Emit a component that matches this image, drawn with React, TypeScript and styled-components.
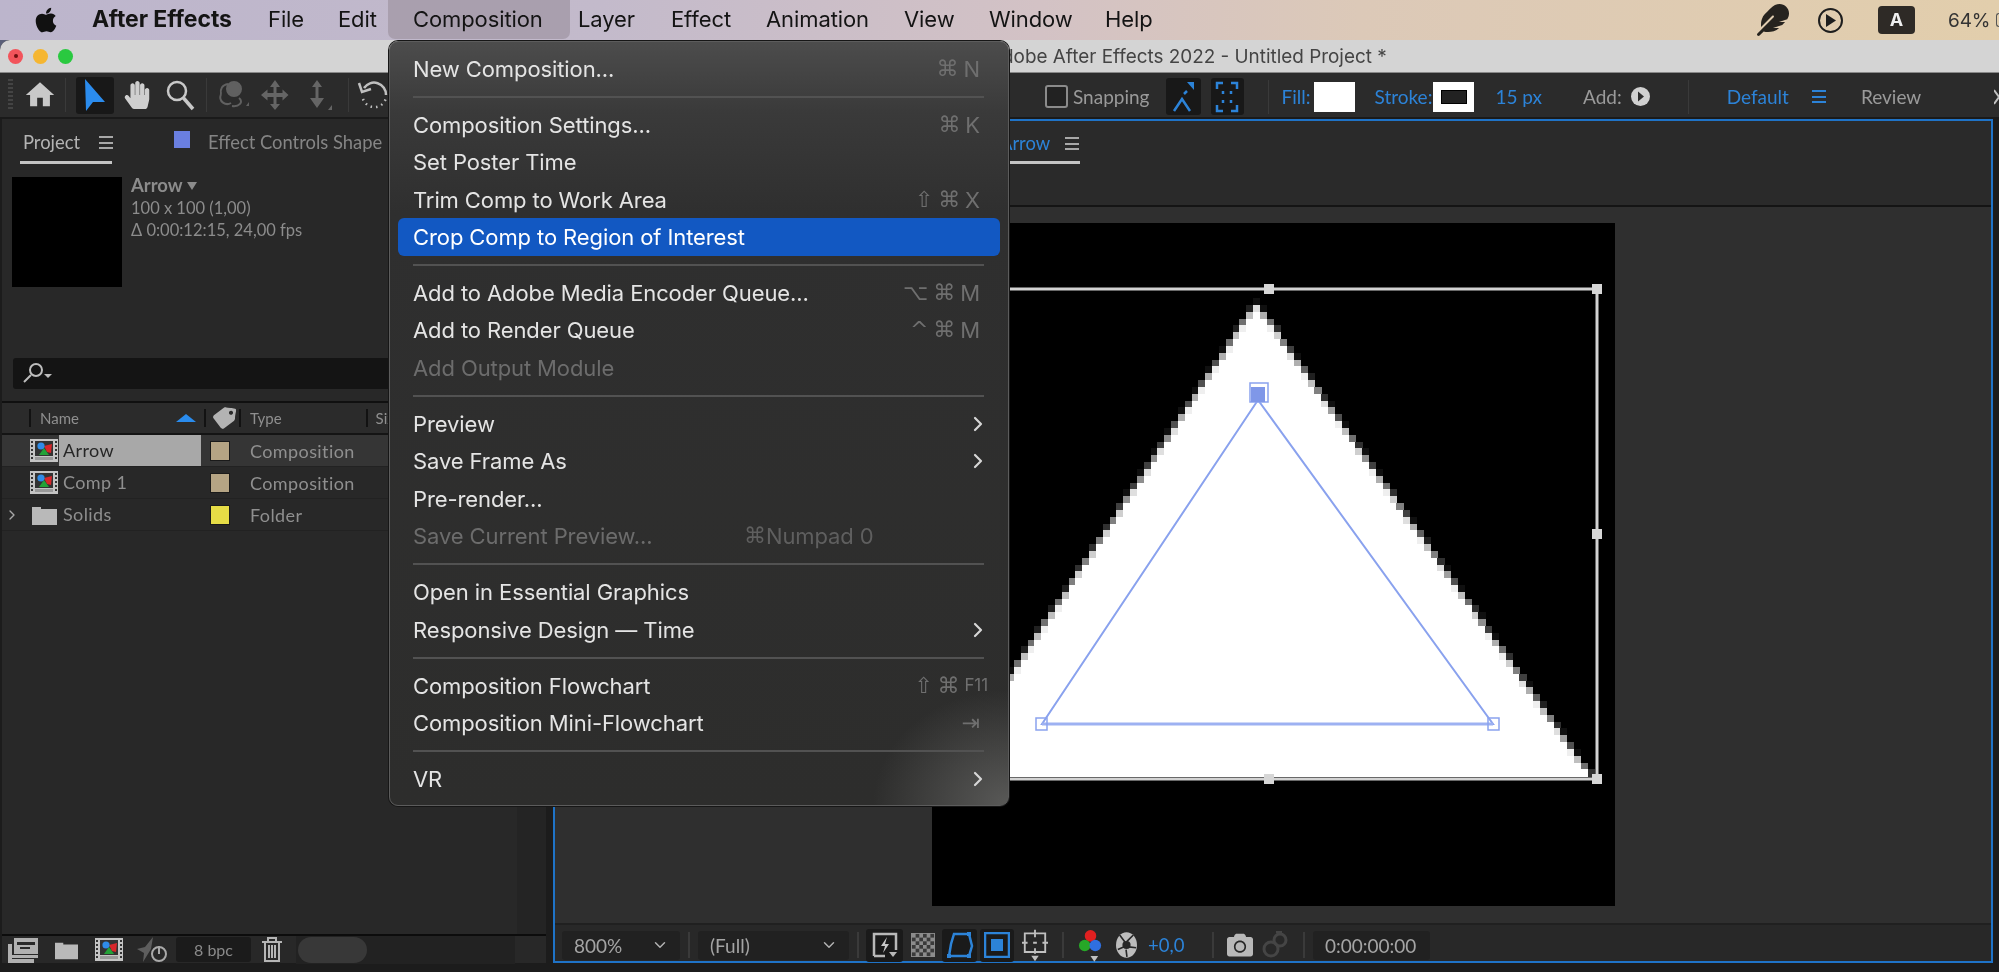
import React from "react";
import styled, { createGlobalStyle } from "styled-components";
import { FaApple, FaFeather, FaHandPaper, FaCamera, FaTag } from "react-icons/fa";
import { MdHome } from "react-icons/md";
import { ChevronRight, ChevronDown } from "lucide-react";

const Global = createGlobalStyle`
  html, body { margin: 0; padding: 0; background: #1e1e1e; overflow: hidden; }
  * { box-sizing: border-box; }
`;

const ui = `"Lato", "Open Sans", sans-serif`;
const mac = `"Inter", "Liberation Sans", sans-serif`;
const blue = "#2c83d8";

const Page = styled.div`
  position: relative; width: 1999px; height: 972px; overflow: hidden;
  display: flex; flex-direction: column; background: #5a5f78; font-family: ${ui};
  filter: blur(0.45px);
`;

/* ---------- macOS menu bar ---------- */
const MenuBar = styled.div`
  height: 40px; flex: none; display: flex; align-items: stretch; padding-left: 35px;
  background: linear-gradient(90deg, #bcb5cc 0%, #c3bacb 30%, #d3c2c5 52%, #dcc9b8 68%, #e2ceac 100%);
  color: #141414; font: 400 22px/39px ${mac}; letter-spacing: -0.1px;
`;
const AppleMark = styled.div`width: 22px; display: flex; align-items: center; justify-content: center; margin-right: 35px; color: #111;`;
const AppName = styled.div`font-weight: 700; font-size: 23px; width: 176px; flex: none; white-space: nowrap;`;
const MenuTitle = styled.div<{ $w: number; $active?: boolean }>`
  width: ${p => p.$w}px; flex: none; white-space: nowrap;
  ${p => p.$active ? `background: #a99fae; border-radius: 0 0 7px 7px; padding-left: 25px; margin: 0 8px 1px -25px;` : ""}
`;
const StatusArea = styled.div`margin-left: auto; display: flex; align-items: center; color: #2a2a2a;`;
const PlayCircle = styled.div`
  width: 25px; height: 25px; margin: 0 0 0 29px; border: 2.5px solid #1e1e1e; border-radius: 50%;
  display: flex; align-items: center; justify-content: center;
`;
const InputBadge = styled.div`
  width: 37px; height: 28px; margin-left: 35px; border-radius: 4px; background: #2e2a26; color: #f0f0f0;
  font: 700 18px/28px ${mac}; text-align: center;
`;
const Battery = styled.div`
  margin-left: 33px; width: 51px; display: flex; align-items: center; justify-content: space-between;
  font: 400 19px/39px ${mac}; color: #333; white-space: nowrap;
`;
const BatteryEdge = styled.span`width: 3px; height: 14px; border: 1.5px solid #555; border-right: 0; border-radius: 3px 0 0 3px;`;

/* ---------- Application window ---------- */
const Window = styled.div`
  flex: 1; min-height: 0; display: flex; flex-direction: column; background: #1c1c1c;
  border-radius: 10px 0 0 0; overflow: hidden;
`;
const TitleBar = styled.div`
  height: 33px; flex: none; background: #d4d4d4; display: flex; align-items: center; padding-left: 8px; border-bottom: 1px solid #888;
`;
const Light = styled.span<{ $c: string }>`
  width: 15px; height: 15px; border-radius: 50%; background: ${p => p.$c}; margin-right: 10px; flex: none;
  display: flex; align-items: center; justify-content: center;
`;
const Dot = styled.span`width: 4px; height: 4px; border-radius: 50%; background: #701010;`;
const WindowTitle = styled.div`margin-left: 906px; padding-top: 1px; font: 400 18.9px/32px ${mac}; color: #444; white-space: nowrap;`;

const Toolbar = styled.div`
  height: 46px; flex: none; display: flex; align-items: center;
  background: #2b2b2b; border-bottom: 2px solid #1a1a1a; overflow: hidden;
`;
const ToolGroup = styled.div<{ $left?: boolean }>`
  display: flex; align-items: center; height: 100%; flex: none;
  ${p => p.$left ? "width: 1045px;" : "width: 954px; padding-top: 3px;"}
`;
const Grip = styled.div`
  width: 5px; height: 32px; margin-left: 8px;
  background: repeating-linear-gradient(180deg, #444 0 2px, transparent 2px 4px);
`;
const ToolSlot = styled.div<{ $w: number; $ml?: number; $on?: boolean; $h?: number }>`
  width: ${p => p.$w}px; height: ${p => p.$h ?? 37}px; margin-left: ${p => p.$ml ?? 0}px; flex: none;
  display: flex; align-items: center; justify-content: center; border-radius: 3px;
  background: ${p => p.$on ? "#181818" : "transparent"};
`;
const ToolDivider = styled.div<{ $ml: number }>`width: 1px; height: 34px; background: #3a3a3a; margin-left: ${p => p.$ml}px; flex: none;`;
const SnapBox = styled.div`width: 23px; height: 23px; border: 2.5px solid #8b8b8b; border-radius: 3px; background: #222; flex: none;`;
const ToolLabel = styled.span<{ $c?: string; $ml?: number }>`
  font: 400 19px/1 ${ui}; color: ${p => p.$c ?? "#9a9a9a"}; margin-left: ${p => p.$ml ?? 0}px; white-space: nowrap; flex: none;
`;
const Swatch = styled.div<{ $ml: number }>`
  width: 41px; height: 30px; background: #fff; margin-left: ${p => p.$ml}px; flex: none;
  display: flex; align-items: center; justify-content: center;
`;
const SwatchHole = styled.div`width: 26px; height: 14px; background: #222; border: 1px solid #000;`;
const Burger = styled.div<{ $c?: string; $ml?: number }>`
  width: 14px; height: 13px; margin-left: ${p => p.$ml ?? 0}px; flex: none;
  background: repeating-linear-gradient(180deg, ${p => p.$c ?? "#a8a8a8"} 0 2px, transparent 2px 5.5px);
`;
const MoreMark = styled.svg`margin-left: auto; flex: none;`;

const Workspace = styled.div`flex: 1; min-height: 0; display: flex; padding-bottom: 9px; background: #1c1c1c;`;

/* ---------- Project panel ---------- */
const ProjectPanel = styled.div`
  width: 544px; flex: none; margin-left: 2px; display: flex; flex-direction: column; background: #282828;
`;
const PanelTabs = styled.div`height: 45px; flex: none; display: flex; align-items: flex-start;`;
const Tab = styled.div<{ $ml: number; $active?: boolean; $w?: number }>`
  margin-left: ${p => p.$ml}px; height: 45px; display: flex; align-items: center; padding: 4px 0 0 3px;
  ${p => p.$w ? `width:${p.$w}px;` : ""}
  border-bottom: ${p => p.$active ? "3px solid #c4c4c4" : "3px solid transparent"};
`;
const TabText = styled.span<{ $c: string }>`font: 400 18.4px/1 ${ui}; color: ${p => p.$c}; white-space: nowrap;`;
const ColorChip = styled.span`width: 16px; height: 17px; background: #6a7fe0; margin-right: 18px; flex: none; margin-top: -6px;`;
const InfoRow = styled.div`height: 194px; flex: none; display: flex; padding: 13px 0 0 10px;`;
const Thumb = styled.div`width: 110px; height: 110px; background: #000; flex: none;`;
const InfoText = styled.div`margin-left: 9px; margin-top: -3px;`;
const InfoName = styled.div`font: 700 18.5px/23px ${ui}; color: #8c8c8c; display: flex; align-items: center; gap: 4px;`;
const DownCaret = styled.span`width: 0; height: 0; border-left: 5px solid transparent; border-right: 5px solid transparent; border-top: 8px solid #8c8c8c;`;
const InfoLine = styled.div`font: 400 16.5px/22px ${ui}; color: #8c8c8c; white-space: nowrap;`;
const SearchField = styled.div`
  height: 31px; flex: none; margin: 0 28px 0 11px; background: #141414; border-radius: 3px; display: flex; align-items: center; padding-left: 10px;
`;
const Header = styled.div`
  height: 34px; flex: none; margin-top: 12px; display: flex; align-items: center; background: #2b2b2b;
  border-top: 2px solid #101010; border-bottom: 2px solid #141414; position: relative;
`;
const HeadSep = styled.div<{ $ml: number }>`width: 2px; height: 18px; background: #121212; margin-left: ${p => p.$ml}px; flex: none;`;
const HeadText = styled.span<{ $ml: number }>`font: 400 15px/1 ${ui}; color: #8f8f8f; margin-left: ${p => p.$ml}px; flex: none;`;
const SortCaret = styled.span`
  width: 0; height: 0; margin-left: 97px; flex: none; border-left: 10px solid transparent; border-right: 10px solid transparent; border-bottom: 8px solid #2a8cee;
`;
const Row = styled.div<{ $sel?: boolean }>`
  height: 32px; flex: none; display: flex; align-items: center; border-bottom: 1px solid #222; position: relative;
  background: ${p => p.$sel ? "#353535" : "#282828"};
`;
const Twisty = styled.div`width: 27px; flex: none; display: flex; justify-content: center; color: #a8a8a8;`;
const RowIcon = styled.div`width: 30px; flex: none; display: flex; justify-content: center;`;
const RowName = styled.div<{ $sel?: boolean }>`
  width: 142px; height: ${p => p.$sel ? 31 : 32}px; flex: none; padding-left: 4px; margin-right: 10px;
  font: 400 18px/31px ${ui}; letter-spacing: .4px;
  background: ${p => p.$sel ? "#a8a8a8" : "transparent"}; color: ${p => p.$sel ? "#262626" : "#8f8f8f"}; white-space: nowrap;
`;
const Label = styled.div<{ $c: string }>`
  width: 18px; height: 18px; flex: none; background: ${p => p.$c}; outline: 1px solid #1a1a1a;
`;
const RowType = styled.div`font: 400 18px/1 ${ui}; color: #8f8f8f; margin-left: 21px; letter-spacing: .4px;`;
const PanelFill = styled.div`flex: 1; min-height: 0; display: flex; justify-content: flex-end;`;
const ScrollTrack = styled.div`width: 29px; background: #242424;`;
const BottomBar = styled.div`
  height: 29px; flex: none; display: flex; align-items: center; background: #282828; border-top: 2px solid #0c0c0c; position: relative;
`;
const BpcBox = styled.div`
  width: 75px; height: 25px; margin-left: 9px; flex: none; background: #1b1b1b; border-radius: 3px;
  font: 400 16px/25px ${ui}; color: #8a8a8a; text-align: center;
`;
const DarkZone = styled.div`
  flex: none; width: 219px; height: 28px; margin-left: 14px; background: #222; display: flex; align-items: center; padding-left: 2px;
`;
const Pill = styled.div`width: 69px; height: 26px; border-radius: 13px; background: #383838;`;
const IconSlot = styled.div<{ $w: number; $ml: number }>`
  width: ${p => p.$w}px; margin-left: ${p => p.$ml}px; flex: none; display: flex; justify-content: center; align-items: center;
`;

/* ---------- Composition panel ---------- */
const CompPanel = styled.div`
  width: 1440px; margin-left: 7px; flex: none; display: flex; flex-direction: column; border: 2px solid #1f73c7; background: #2a2a2a;
`;
const CompTabs = styled.div`height: 86px; flex: none; display: flex; align-items: flex-start; border-bottom: 2px solid #141414;`;
const CompTab = styled.div`
  margin-left: 445px; height: 43px; display: flex; align-items: center; padding-top: 4px; width: 80px; gap: 15px;
  border-bottom: 3px solid #c4c4c4;
`;
const Viewer = styled.div`
  flex: 1; min-height: 0; background: #2f2f2f; display: flex; justify-content: center; align-items: flex-start; padding-top: 16px; border-bottom: 2px solid #202020;
`;
const Canvas = styled.div`width: 683px; height: 683px; background: #000; flex: none; position: relative;`;
const Overlay = styled.svg`position: absolute; left: 0; top: 0; overflow: visible;`;
const CompFooter = styled.div`height: 36px; flex: none; display: flex; align-items: center; background: #282828; padding-top: 4px;`;
const DropBox = styled.div<{ $w: number; $ml: number }>`
  width: ${p => p.$w}px; height: 29px; margin-left: ${p => p.$ml}px; flex: none; background: #212121; border-radius: 3px;
  display: flex; align-items: center; justify-content: space-between; padding: 0 11px 0 12px; font: 400 19px/1 ${ui}; color: #a4a4a4; white-space: nowrap;
`;
const FootSep = styled.div<{ $ml: number }>`width: 2px; height: 26px; background: #3a3a3a; margin-left: ${p => p.$ml}px; flex: none;`;
const FootBtn = styled.div<{ $w: number; $ml: number; $on?: boolean }>`
  width: ${p => p.$w}px; height: 33px; margin-left: ${p => p.$ml}px; flex: none; border-radius: 3px;
  background: ${p => p.$on ? "#1a1a1a" : "transparent"}; display: flex; align-items: center; justify-content: center;
`;
const Exposure = styled.span`font: 400 18.5px/1 ${ui}; color: ${blue}; margin-left: 10px; width: 36px; flex: none; white-space: nowrap;`;

/* ---------- Composition dropdown ---------- */
const Dropdown = styled.div`
  position: absolute; left: 389px; top: 41px; width: 620px; height: 765px; padding: 8px 8px 0 8px;
  border-radius: 9px; border: 1.5px solid #5c5c5c; box-shadow: 0 0 0 1px #161616;
  background:
    radial-gradient(ellipse 135px 115px at 100% 100%, rgba(125,125,123,.55), rgba(125,125,123,0) 100%),
    linear-gradient(180deg, #4c4c4c 0, #3a3a3a 70px, #2f2f2f 170px, #2d2d2c 100%);
  font: 400 22px/1 ${mac}; color: #e4e4e4; letter-spacing: -0.1px;
`;
const Item = styled.div<{ $hi?: boolean; $off?: boolean; $start?: boolean }>`
  height: 37.4px; display: flex; align-items: center; justify-content: ${p => p.$start ? "flex-start" : "space-between"};
  padding: 0 20px 0 15px; border-radius: 6px; white-space: nowrap;
  color: ${p => p.$off ? "#6c6c6c" : p.$hi ? "#ffffff" : "#e4e4e4"};
  background: ${p => p.$hi ? "#1258c2" : "transparent"};
`;
const ItemLabel = styled.span<{ $min?: number }>`${p => p.$min ? `min-width:${p.$min}px;` : ""}`;
const Keys = styled.span<{ $off?: boolean; $tight?: boolean; $over?: number }>`
  display: flex; align-items: center; gap: ${p => p.$tight ? 0 : 5}px; margin-right: ${p => p.$over ?? 0}px;
  color: ${p => p.$off ? "#5f5f5f" : "#6f6f6f"}; font: 400 22px/1 ${mac};
`;
const KeyGlyph = styled.span`font: 400 22px/1 "DejaVu Sans", sans-serif;`;
const SmallKey = styled.span`font-size: 17px;`;
const Sep = styled.div`height: 2px; margin: 8.5px 16px 8.2px 15px; background: #525252;`;

/* ---------- Drawings ---------- */
const CompIcon = () => (
  <svg width="28" height="23" viewBox="0 0 28 23">
    <rect x="0" y="0" width="28" height="23" fill="#c4c4c4" />
    {[0, 1, 2, 3, 4].map(i => <g key={i}><rect x="1" y={2 + i * 4} width="2" height="2" fill="#333" /><rect x="25" y={2 + i * 4} width="2" height="2" fill="#333" /></g>)}
    <rect x="5" y="2" width="18" height="15" fill="#333" />
    <polygon points="14,7 22,5 21,14 17,13" fill="#d8262a" />
    <circle cx="11" cy="7" r="3.6" fill="#2f8ce8" />
    <polygon points="14,9 19,16 9,16" fill="#24a138" />
    <rect x="5" y="18" width="18" height="3" fill="#999" />
  </svg>
);
const FolderIcon = ({ w = 25, h = 20 }: { w?: number; h?: number }) => (
  <svg width={w} height={h} viewBox="0 0 25 20">
    <path d="M0 2h9v2H0zM0 4h25v16H0z" fill="#b9b9b9" />
  </svg>
);
const Magnifier = () => (
  <svg width="30" height="32" viewBox="0 0 30 32" fill="none" stroke="#c8c8c8" strokeWidth="2.5">
    <circle cx="12" cy="12" r="9" /><path d="M18.5 19 28 30" strokeWidth="3.5" />
  </svg>
);
const RotateTool = () => (
  <svg width="32" height="30" viewBox="0 0 32 30" fill="none" stroke="#606060" strokeWidth="2">
    <circle cx="17" cy="9" r="7" fill="#606060" /><path d="M4 14c-3 8 5 12 10 9" /><path d="M22 18c5 4 0 9-7 8" /><path d="M11 4C5 5 3 9 4 14" />
    <path d="M29 26l3 0 0-4z" fill="#606060" stroke="none" />
  </svg>
);
const MoveTool = () => (
  <svg width="32" height="30" viewBox="0 0 32 30" fill="#656565">
    <path d="M14 0l-5 7h3.5v6H6.5V9.500L0 15l6.500 5.500V17h6v7H9l5 6 5-6h-3.500v-7h6v3.500l6-5.500-6-5.500V13h-6V7H19z" />
  </svg>
);
const AxisTool = () => (
  <svg width="24" height="30" viewBox="0 0 24 30" fill="#656565">
    <path d="M9 0L4 7h3.500v11H2l7 10 7-10H10.500V7H14z" />
    <path d="M24 30v-5l-4 5z" />
  </svg>
);
const UndoTool = () => (
  <svg width="34" height="34" viewBox="0 0 34 34" fill="none" stroke="#c0c0c0" strokeWidth="2.5">
    <path d="M7 10A12 12 0 0 1 29 17" />
    <path d="M2 5l3 9 9-3" strokeWidth="2.5" />
    <path d="M6 21A12 12 0 0 0 29 20" strokeDasharray="1.500 4" />
  </svg>
);
const SnapArrow = () => (
  <svg width="24" height="34" viewBox="0 0 24 34" fill="none" stroke={blue} strokeWidth="2.500">
    <path d="M3 31l8-12 8 12" /><path d="M13 14l3-3" /><path d="M16 2h7v8z" fill={blue} stroke="none" />
  </svg>
);
const SnapFrame = () => (
  <svg width="24" height="34" viewBox="0 0 24 34" fill="none" stroke={blue} strokeWidth="2.500">
    <path d="M2 9V3h6M16 3h6v6M22 25v6h-6M8 31H2v-6" /><path d="M8 11v3M16 11v3M8 20v3M16 20v3" />
  </svg>
);
const AddPlay = () => (
  <svg width="19" height="19" viewBox="0 0 19 19"><circle cx="9.500" cy="9.500" r="9.500" fill="#d0d0d0" /><path d="M7 4.500l6 5-6 5z" fill="#2b2b2b" /></svg>
);
const LensIcon = () => (
  <svg width="29" height="23" viewBox="0 0 29 23" fill="none" stroke="#bdbdbd" strokeWidth="2">
    <circle cx="13" cy="8" r="6" /><path d="M8 13l-7 7" /><path d="M21 12l4 4 4-4z" fill="#bdbdbd" stroke="none" />
  </svg>
);
const TagIcon = () => <FaTag size={22} color="#b3b3b3" style={{ transform: "scaleX(-1) rotate(-8deg)" }} />;
const CompFlow = () => (
  <svg width="30" height="27" viewBox="0 0 30 27" fill="#b0b0b0">
    <rect x="6" y="2" width="24" height="16" /><rect x="9" y="6" width="18" height="3" fill="#282828" /><rect x="12" y="11" width="10" height="2" fill="#282828" />
    <path d="M0 8h4v19H0zM4 19h26v3H4zM4 23h22v4H4z" />
  </svg>
);
const RocketPower = () => (
  <svg width="30" height="26" viewBox="0 0 30 26" fill="none">
    <path d="M0 12l8-2 8-10-2 12-8 13 1-9z" fill="#5e5e5e" />
    <circle cx="22" cy="17" r="7" stroke="#a9a9a9" strokeWidth="2" /><path d="M22 9v8" stroke="#a9a9a9" strokeWidth="2" />
  </svg>
);
const TrashIcon = () => (
  <svg width="20" height="25" viewBox="0 0 20 25" fill="none" stroke="#b5b5b5" strokeWidth="2">
    <path d="M0 5h20M6 4V1h8v3M3 5v19h14V5M7 8v13M10 8v13M13 8v13" />
  </svg>
);
const BoostIcon = () => (
  <svg width="26" height="26" viewBox="0 0 26 26" fill="none">
    <path d="M2 24V2h22v16M2 24h11" stroke="#b8b8b8" strokeWidth="2.500" />
    <path d="M15 5l-6 9h4l-2 7 6-9h-4z" fill="#c8c8c8" /><path d="M17 20h8l-4 5z" fill="#b8b8b8" />
  </svg>
);
const CheckerIcon = () => (
  <svg width="24" height="24" viewBox="0 0 26 26">
    <rect width="26" height="26" fill="#8c8c8c" />
    {[0, 1, 2, 3, 4, 5].flatMap(r => [0, 1, 2, 3, 4, 5].map(c => (r + c) % 2 ? <rect key={`${r}${c}`} x={c * 4 + 1} y={r * 4 + 1} width="4" height="4" fill="#3a3a3a" /> : null))}
  </svg>
);
const MaskIcon = () => (
  <svg width="28" height="28" viewBox="0 0 28 28" fill="none" stroke={blue} strokeWidth="2.500">
    <path d="M8 3h15l3 12-3 10H3l2-12z" />
    <g fill={blue} stroke="none"><rect x="21" y="1" width="4" height="4" /><rect x="1" y="23" width="4" height="4" /><rect x="21" y="23" width="4" height="4" /></g>
  </svg>
);
const RegionIcon = () => (
  <svg width="26" height="26" viewBox="0 0 26 26">
    <rect x="1" y="1" width="24" height="24" fill="none" stroke={blue} strokeWidth="2.500" /><rect x="7" y="7" width="12" height="12" fill={blue} />
  </svg>
);
const GridIcon = () => (
  <svg width="26" height="33" viewBox="0 0 28 34" fill="none" stroke="#c0c0c0" strokeWidth="2">
    <path d="M3 4h22v20H3zM14 0v8M14 20v6M0 14h6M22 14h6M12 14h4" /><path d="M10 28h8l-4 6z" fill="#c0c0c0" stroke="none" />
  </svg>
);
const RgbIcon = () => (
  <svg width="25" height="33" viewBox="0 0 26 34">
    <circle cx="13" cy="7" r="6" fill="#e02020" /><circle cx="7" cy="17" r="6" fill="#27a827" /><circle cx="18" cy="17" r="6" fill="#2f6fe0" />
    <path d="M13 28h8l-4 6z" fill="#c0c0c0" />
  </svg>
);
const ShutterIcon = () => (
  <svg width="21" height="28" viewBox="0 0 23 28">
    <ellipse cx="11.500" cy="14" rx="11.500" ry="14" fill="#bdbdbd" />
    <circle cx="11.500" cy="14" r="4.500" fill="#282828" />
    <path d="M4 3l6 8M19 3l-7 7M22 17l-8-1M12 27l-1-8M2 19l7-3" stroke="#282828" strokeWidth="1.800" />
  </svg>
);
const SnapCam = () => <FaCamera size={26} color="#b8b8b8" />;
const ShowSnap = () => (
  <svg width="26" height="28" viewBox="0 0 26 28" fill="none" stroke="#454545" strokeWidth="3">
    <circle cx="9" cy="18" r="7" /><circle cx="18" cy="9" r="6" /><path d="M14 1h6" />
  </svg>
);
const ArrowSel = () => (
  <svg width="22" height="32" viewBox="0 0 22 32"><path d="M1 0l20 23H9L2 32z" fill="#2b8cee" /></svg>
);

/* Pixelated triangle: coverage of each 100x100 comp pixel on the 683px canvas. */
const PX = 6.83;
const inTri = (x: number, y: number) => {
  if (y < 80 || y > 553.3) return false;
  const t = (y - 80) / 473;
  return x >= 324 - 312 * t && x <= 324 + 335 * t;
};
const shapeRuns: { x: number; y: number; w: number; f: string }[] = [];
for (let r = 0; r < 100; r++) {
  let runStart = -1;
  for (let c = 0; c <= 100; c++) {
    let hits = 0;
    if (c < 100) {
      for (let a = 0; a < 4; a++) for (let b = 0; b < 4; b++) {
        if (inTri((c + (a + .5) / 4) * PX, (r + (b + .5) / 4) * PX)) hits++;
      }
    }
    if (hits === 16) { if (runStart < 0) runStart = c; continue; }
    if (runStart >= 0) { shapeRuns.push({ x: runStart * PX, y: r * PX, w: (c - runStart) * PX, f: "#fff" }); runStart = -1; }
    if (hits > 0) { const v = Math.round(hits / 16 * 255); shapeRuns.push({ x: c * PX, y: r * PX, w: PX, f: `rgb(${v},${v},${v})` }); }
  }
}
const Handle = ({ x, y }: { x: number; y: number }) => <rect x={x - 5} y={y - 5} width="10" height="10" fill="#d6d6d6" />;

const ShapeOverlay = () => (
  <Overlay width="683" height="683" viewBox="0 0 683 683">
    <g shapeRendering="crispEdges">
      {shapeRuns.map((s, i) => <rect key={i} x={s.x} y={s.y} width={s.w + .3} height={PX + .3} fill={s.f} />)}
    </g>
    <rect x="9" y="66" width="656" height="490" fill="none" stroke="#d2d2d2" strokeWidth="3" />
    <Handle x={337} y={66} /><Handle x={665} y={66} /><Handle x={665} y={311} /><Handle x={665} y={556} /><Handle x={337} y={556} />
    <polygon points="326,177 110,501 561,501" fill="none" stroke="#8aa2ee" strokeWidth="2" />
    <line x1="110" y1="501" x2="561" y2="501" stroke="#9db1f2" strokeWidth="3" />
    <rect x="318" y="160" width="18" height="19" fill="#fff" stroke="#8aa2ee" strokeWidth="1.500" />
    <rect x="319" y="164" width="14" height="15" fill="#7f97e8" />
    <rect x="104" y="495" width="11" height="12" fill="none" stroke="#8aa2ee" strokeWidth="1.500" />
    <rect x="556" y="495" width="11" height="12" fill="none" stroke="#8aa2ee" strokeWidth="1.500" />
  </Overlay>
);

const ChevSlot = styled.span`display: flex; margin-right: -10px; color: #d6d6d6;`;
const Chev = () => <ChevSlot><ChevronRight size={24} strokeWidth={2.2} /></ChevSlot>;
const TwistyChevron = styled.span`display: flex; margin-left: -8px;`;
const Cmd = () => <KeyGlyph>⌘</KeyGlyph>;

export default function App() {
  return (
    <Page>
      <Global />
      <MenuBar>
        <AppleMark><FaApple size={28} /></AppleMark>
        <AppName>After Effects</AppName>
        <MenuTitle $w={70}>File</MenuTitle>
        <MenuTitle $w={75}>Edit</MenuTitle>
        <MenuTitle $w={182} $active>Composition</MenuTitle>
        <MenuTitle $w={93}>Layer</MenuTitle>
        <MenuTitle $w={95}>Effect</MenuTitle>
        <MenuTitle $w={138}>Animation</MenuTitle>
        <MenuTitle $w={85}>View</MenuTitle>
        <MenuTitle $w={116}>Window</MenuTitle>
        <MenuTitle $w={60}>Help</MenuTitle>
        <StatusArea>
          <FaFeather size={32} color="#26231f" />
          <PlayCircle><svg width="10" height="13" viewBox="0 0 10 13"><path d="M0 0l10 6.500L0 13z" fill="#1e1e1e" /></svg></PlayCircle>
          <InputBadge>A</InputBadge>
          <Battery>64%<BatteryEdge /></Battery>
        </StatusArea>
      </MenuBar>
      <Window>
        <TitleBar>
          <Light $c="#f2545b"><Dot /></Light>
          <Light $c="#f5b631" />
          <Light $c="#2ac940" />
          <WindowTitle>Adobe After Effects 2022 - Untitled Project *</WindowTitle>
        </TitleBar>
        <Toolbar>
          <ToolGroup $left>
            <Grip />
            <ToolSlot $w={34} $ml={10}><MdHome size={36} color="#c8c8c8" /></ToolSlot>
            <ToolDivider $ml={8} />
            <ToolSlot $w={38} $ml={10} $on><ArrowSel /></ToolSlot>
            <ToolSlot $w={32} $ml={7}><FaHandPaper size={28} color="#cfcfcf" /></ToolSlot>
            <ToolSlot $w={30} $ml={12}><Magnifier /></ToolSlot>
            <ToolDivider $ml={11} />
            <ToolSlot $w={34} $ml={9}><RotateTool /></ToolSlot>
            <ToolSlot $w={32} $ml={11}><MoveTool /></ToolSlot>
            <ToolSlot $w={24} $ml={15}><AxisTool /></ToolSlot>
            <ToolDivider $ml={16} />
            <ToolSlot $w={34} $ml={8}><UndoTool /></ToolSlot>
          </ToolGroup>
          <ToolGroup>
            <SnapBox />
            <ToolLabel $ml={5}>Snapping</ToolLabel>
            <ToolSlot $w={35} $ml={16} $on><SnapArrow /></ToolSlot>
            <ToolSlot $w={33} $ml={10} $on><SnapFrame /></ToolSlot>
            <ToolDivider $ml={24} />
            <ToolLabel $c={blue} $ml={13}>Fill:</ToolLabel>
            <Swatch $ml={3} />
            <ToolLabel $c={blue} $ml={20}>Stroke:</ToolLabel>
            <Swatch $ml={1}><SwatchHole /></Swatch>
            <ToolLabel $c={blue} $ml={21}>15 px</ToolLabel>
            <ToolLabel $ml={41}>Add:</ToolLabel>
            <ToolSlot $w={19} $ml={9} $h={19}><AddPlay /></ToolSlot>
            <ToolDivider $ml={38} />
            <ToolLabel $c={blue} $ml={38}>Default</ToolLabel>
            <Burger $c={blue} $ml={23} />
            <ToolLabel $ml={35}>Review</ToolLabel>
            <MoreMark width="5" height="16" viewBox="0 0 5 16" fill="none" stroke="#c0c0c0" strokeWidth="2"><path d="M0 1l5 7-5 7" /></MoreMark>
          </ToolGroup>
        </Toolbar>
        <Workspace>
          <ProjectPanel>
            <PanelTabs>
              <Tab $ml={18} $active $w={92}>
                <TabText $c="#b4b4b4">Project</TabText>
                <Burger $ml={19} />
              </Tab>
              <Tab $ml={59}>
                <ColorChip />
                <TabText $c="#858585">Effect Controls Shape</TabText>
              </Tab>
            </PanelTabs>
            <InfoRow>
              <Thumb />
              <InfoText>
                <InfoName>Arrow<DownCaret /></InfoName>
                <InfoLine>100 x 100 (1,00)</InfoLine>
                <InfoLine>Δ 0:00:12:15, 24,00 fps</InfoLine>
              </InfoText>
            </InfoRow>
            <SearchField><LensIcon /></SearchField>
            <Header>
              <HeadSep $ml={27} />
              <HeadText $ml={9}>Name</HeadText>
              <SortCaret />
              <HeadSep $ml={8} />
              <IconSlot $w={26} $ml={5}><TagIcon /></IconSlot>
              <HeadSep $ml={2} />
              <HeadText $ml={9}>Type</HeadText>
              <HeadSep $ml={84} />
              <HeadText $ml={8}>Size</HeadText>
            </Header>
            <Row $sel>
              <Twisty />
              <RowIcon><CompIcon /></RowIcon>
              <RowName $sel>Arrow</RowName>
              <Label $c="#b5a484" />
              <RowType>Composition</RowType>
            </Row>
            <Row>
              <Twisty />
              <RowIcon><CompIcon /></RowIcon>
              <RowName>Comp 1</RowName>
              <Label $c="#b5a484" />
              <RowType>Composition</RowType>
            </Row>
            <Row>
              <Twisty><TwistyChevron><ChevronRight size={16} strokeWidth={2} /></TwistyChevron></Twisty>
              <RowIcon><FolderIcon /></RowIcon>
              <RowName>Solids</RowName>
              <Label $c="#e6dc46" />
              <RowType>Folder</RowType>
            </Row>
            <PanelFill><ScrollTrack /></PanelFill>
            <BottomBar>
              <IconSlot $w={30} $ml={6}><CompFlow /></IconSlot>
              <IconSlot $w={24} $ml={16}><FolderIcon w={23} h={20} /></IconSlot>
              <IconSlot $w={29} $ml={16}><CompIcon /></IconSlot>
              <IconSlot $w={30} $ml={14}><RocketPower /></IconSlot>
              <BpcBox>8 bpc</BpcBox>
              <IconSlot $w={20} $ml={11}><TrashIcon /></IconSlot>
              <DarkZone><Pill /></DarkZone>
            </BottomBar>
          </ProjectPanel>
          <CompPanel>
            <CompTabs>
              <CompTab>
                <TabText $c={blue}>Arrow</TabText>
                <Burger />
              </CompTab>
            </CompTabs>
            <Viewer>
              <Canvas><ShapeOverlay /></Canvas>
            </Viewer>
            <CompFooter>
              <DropBox $w={118} $ml={7}>800%<ChevronDown size={18} color="#b0b0b0" /></DropBox>
              <FootSep $ml={8} />
              <DropBox $w={151} $ml={8}>(Full)<ChevronDown size={18} color="#b0b0b0" /></DropBox>
              <FootSep $ml={8} />
              <FootBtn $w={37} $ml={7} $on><BoostIcon /></FootBtn>
              <FootBtn $w={26} $ml={7}><CheckerIcon /></FootBtn>
              <FootBtn $w={35} $ml={6} $on><MaskIcon /></FootBtn>
              <FootBtn $w={34} $ml={3} $on><RegionIcon /></FootBtn>
              <FootBtn $w={30} $ml={6}><GridIcon /></FootBtn>
              <FootSep $ml={12} />
              <FootBtn $w={30} $ml={11}><RgbIcon /></FootBtn>
              <FootBtn $w={23} $ml={10}><ShutterIcon /></FootBtn>
              <Exposure>+0,0</Exposure>
              <FootSep $ml={28} />
              <FootBtn $w={28} $ml={12}><SnapCam /></FootBtn>
              <FootBtn $w={26} $ml={8}><ShowSnap /></FootBtn>
              <FootSep $ml={15} />
              <DropBox $w={117} $ml={8}>0:00:00:00</DropBox>
            </CompFooter>
          </CompPanel>
        </Workspace>
      </Window>

      <Dropdown>
        <Item><span>New Composition...</span><Keys><Cmd /> N</Keys></Item>
        <Sep />
        <Item><span>Composition Settings...</span><Keys><Cmd /> K</Keys></Item>
        <Item><span>Set Poster Time</span></Item>
        <Item><span>Trim Comp to Work Area</span><Keys><KeyGlyph>⇧</KeyGlyph><Cmd /> X</Keys></Item>
        <Item $hi><span>Crop Comp to Region of Interest</span></Item>
        <Sep />
        <Item><span>Add to Adobe Media Encoder Queue...</span><Keys><KeyGlyph>⌥</KeyGlyph><Cmd /> M</Keys></Item>
        <Item><span>Add to Render Queue</span><Keys><KeyGlyph>^</KeyGlyph><Cmd /> M</Keys></Item>
        <Item $off><span>Add Output Module</span></Item>
        <Sep />
        <Item><span>Preview</span><Chev /></Item>
        <Item><span>Save Frame As</span><Chev /></Item>
        <Item><span>Pre-render...</span></Item>
        <Item $off $start>
          <ItemLabel $min={331}>Save Current Preview...</ItemLabel>
          <Keys $off $tight><Cmd />Numpad 0</Keys>
        </Item>
        <Sep />
        <Item><span>Open in Essential Graphics</span></Item>
        <Item><span>Responsive Design — Time</span><Chev /></Item>
        <Sep />
        <Item><span>Composition Flowchart</span><Keys $over={-8}><KeyGlyph>⇧</KeyGlyph><Cmd /><SmallKey>F11</SmallKey></Keys></Item>
        <Item><span>Composition Mini-Flowchart</span><Keys><KeyGlyph>⇥</KeyGlyph></Keys></Item>
        <Sep />
        <Item><span>VR</span><Chev /></Item>
      </Dropdown>
    </Page>
  );
}
